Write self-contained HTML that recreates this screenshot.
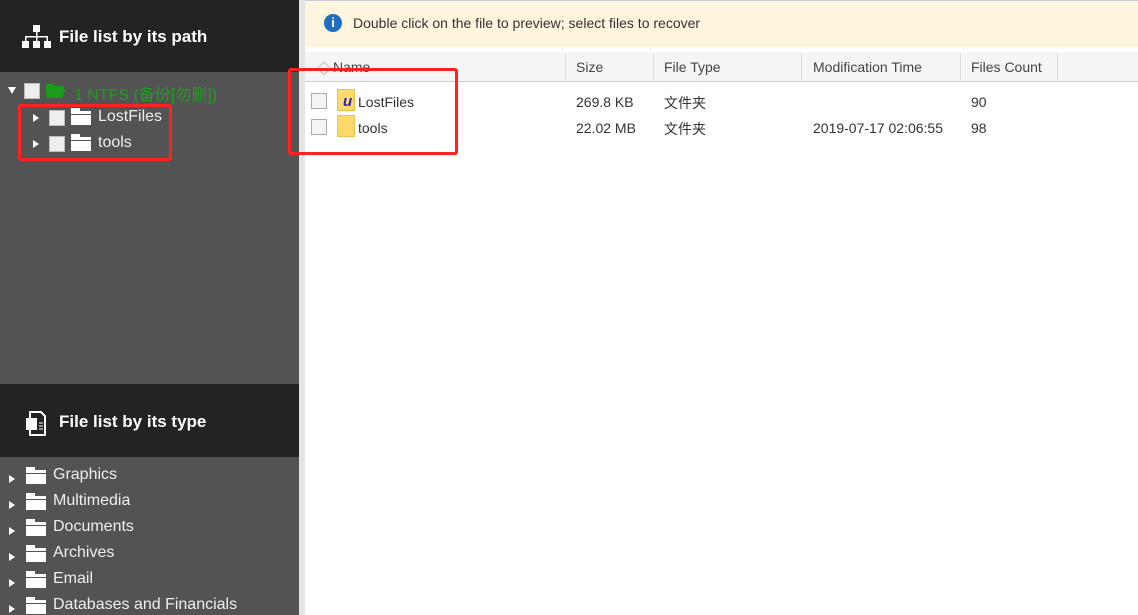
<!DOCTYPE html><html><head><style>
body{margin:0;width:1138px;height:615px;overflow:hidden;font-family:"Liberation Sans","Noto Sans CJK SC",sans-serif;position:relative;background:#fff}
.a{position:absolute}
.lp{left:0;top:0;width:299px;height:615px;background:#535353}
.hd{left:0;width:299px;background:#232323;color:#fff;font-weight:bold;font-size:17px}
.t{color:#eee;font-size:16px}
.tri{width:0;height:0;border-left:6px solid #fff;border-top:4px solid transparent;border-bottom:4px solid transparent}
.cb{width:14px;height:14px;background:#eee;border:1px solid #bbb}
.fold{width:20px;height:14px;background:#fff}
.fold:before{content:"";position:absolute;left:0;top:-3px;width:9px;height:3px;background:#fff}
.fold:after{content:"";position:absolute;left:0;top:3px;width:20px;height:1px;background:#535353}
.c{font-size:14px;color:#333}
.ck{width:14px;height:14px;border:1px solid #aaa;background:#f4f4f4}
.hc{font-size:14px;color:#444;top:59px}
.sep{top:54px;width:1px;height:26px;background:#ddd}
.red{border:3px solid #f22;border-radius:3px}
</style></head><body>
<div class="a lp"></div>
<div class="a hd" style="top:0;height:72px"><span class="a" style="left:59px;top:27px">File list by its path</span>
<svg class="a" style="left:22px;top:24px" width="30" height="26"><rect x="11" y="1" width="7" height="7" fill="#fff"/><rect x="14" y="8" width="1.5" height="5" fill="#fff"/><rect x="3" y="12" width="23" height="1.5" fill="#fff"/><rect x="3" y="12" width="1.5" height="5" fill="#fff"/><rect x="14" y="12" width="1.5" height="5" fill="#fff"/><rect x="24.5" y="12" width="1.5" height="5" fill="#fff"/><rect x="0" y="17" width="7" height="7" fill="#fff"/><rect x="11" y="17" width="7" height="7" fill="#fff"/><rect x="22" y="17" width="7" height="7" fill="#fff"/></svg></div>
<div class="a" style="left:8px;top:87px;width:0;height:0;border-top:7px solid #fff;border-left:4px solid transparent;border-right:4px solid transparent"></div>
<div class="a cb" style="left:24px;top:83px"></div>
<svg class="a" style="left:46px;top:83px" width="20" height="15"><path d="M0 1h7l2 2h9v3H4L0 14z" fill="#1a9c1a"/><path d="M4 6h16l-4 9H0z" fill="#1a9c1a"/></svg>
<span class="a" style="left:74px;top:81px;color:#1e9e1e;font-size:16px">1 NTFS (备份[勿删])</span>
<div class="a tri" style="left:33px;top:114px"></div><div class="a cb" style="left:49px;top:110px"></div><div class="a fold" style="left:71px;top:111px"></div><span class="a t" style="left:98px;top:108px">LostFiles</span>
<div class="a tri" style="left:33px;top:140px"></div><div class="a cb" style="left:49px;top:136px"></div><div class="a fold" style="left:71px;top:137px"></div><span class="a t" style="left:98px;top:134px">tools</span>
<div class="a red" style="left:18px;top:104px;width:148px;height:51px"></div>
<div class="a hd" style="top:384px;height:73px"><span class="a" style="left:59px;top:28px">File list by its type</span>
<svg class="a" style="left:25px;top:27px" width="24" height="26"><path d="M5 1h11l4 4v19H5z" fill="none" stroke="#fff" stroke-width="2"/><rect x="1" y="7" width="11" height="12" fill="#fff"/><path d="M14 12h4M14 15h4M14 18h4" stroke="#fff"/></svg></div>
<div id="types"></div>
<script>
var n=["Graphics","Multimedia","Documents","Archives","Email","Databases and Financials"];
n.forEach(function(s,i){var y=466+i*26;document.write('<div class="a tri" style="left:9px;top:'+(y+9)+'px"></div><div class="a fold" style="left:26px;top:'+(y+4)+'px"></div><span class="a t" style="left:53px;top:'+y+'px">'+s+'</span>');});
</script>
<div class="a" style="left:299px;top:0;width:6px;height:615px;background:#e4e4e4"></div>
<div class="a" style="left:305px;top:0;width:833px;height:46px;background:#fdf5dd;border-top:1px solid #ccc"></div>
<div class="a" style="left:324px;top:14px;width:18px;height:18px;border-radius:50%;background:#1f6fc0;color:#fff;font-weight:bold;font-size:13px;text-align:center;line-height:18px">i</div>
<span class="a" style="left:353px;top:15px;font-size:14px;color:#333">Double click on the file to preview; select files to recover</span>
<div class="a" style="left:305px;top:52px;width:833px;height:29px;background:#f5f5f5;border-bottom:1px solid #ccc"></div>
<span class="a hc" style="left:317px;color:#999">◇</span><span class="a hc" style="left:333px">Name</span>
<div class="a sep" style="left:565px"></div><span class="a hc" style="left:576px">Size</span>
<div class="a sep" style="left:653px"></div><span class="a hc" style="left:664px">File Type</span>
<div class="a sep" style="left:801px"></div><span class="a hc" style="left:813px">Modification Time</span>
<div class="a sep" style="left:960px"></div><span class="a hc" style="left:971px">Files Count</span>
<div class="a sep" style="left:1057px"></div>
<div class="a ck" style="left:311px;top:93px"></div><div class="a" style="left:337px;top:89px;width:16px;height:20px;background:#fcd96a;border:1px solid #e8c050"></div><span class="a" style="left:343px;top:93px;color:#2222cc;font-weight:bold;font-style:italic;font-size:15px">u</span><span class="a c" style="left:358px;top:94px">LostFiles</span>
<div class="a ck" style="left:311px;top:119px"></div><div class="a" style="left:337px;top:115px;width:16px;height:20px;background:#fcd96a;border:1px solid #e8c050"></div><span class="a c" style="left:358px;top:120px">tools</span>
<span class="a c" style="left:576px;top:94px">269.8 KB</span><span class="a c" style="left:664px;top:93px">文件夹</span><span class="a c" style="left:971px;top:94px">90</span>
<span class="a c" style="left:576px;top:120px">22.02 MB</span><span class="a c" style="left:664px;top:119px">文件夹</span><span class="a c" style="left:813px;top:120px">2019-07-17 02:06:55</span><span class="a c" style="left:971px;top:120px">98</span>
<div class="a red" style="left:288px;top:68px;width:164px;height:81px"></div>
</body></html>
